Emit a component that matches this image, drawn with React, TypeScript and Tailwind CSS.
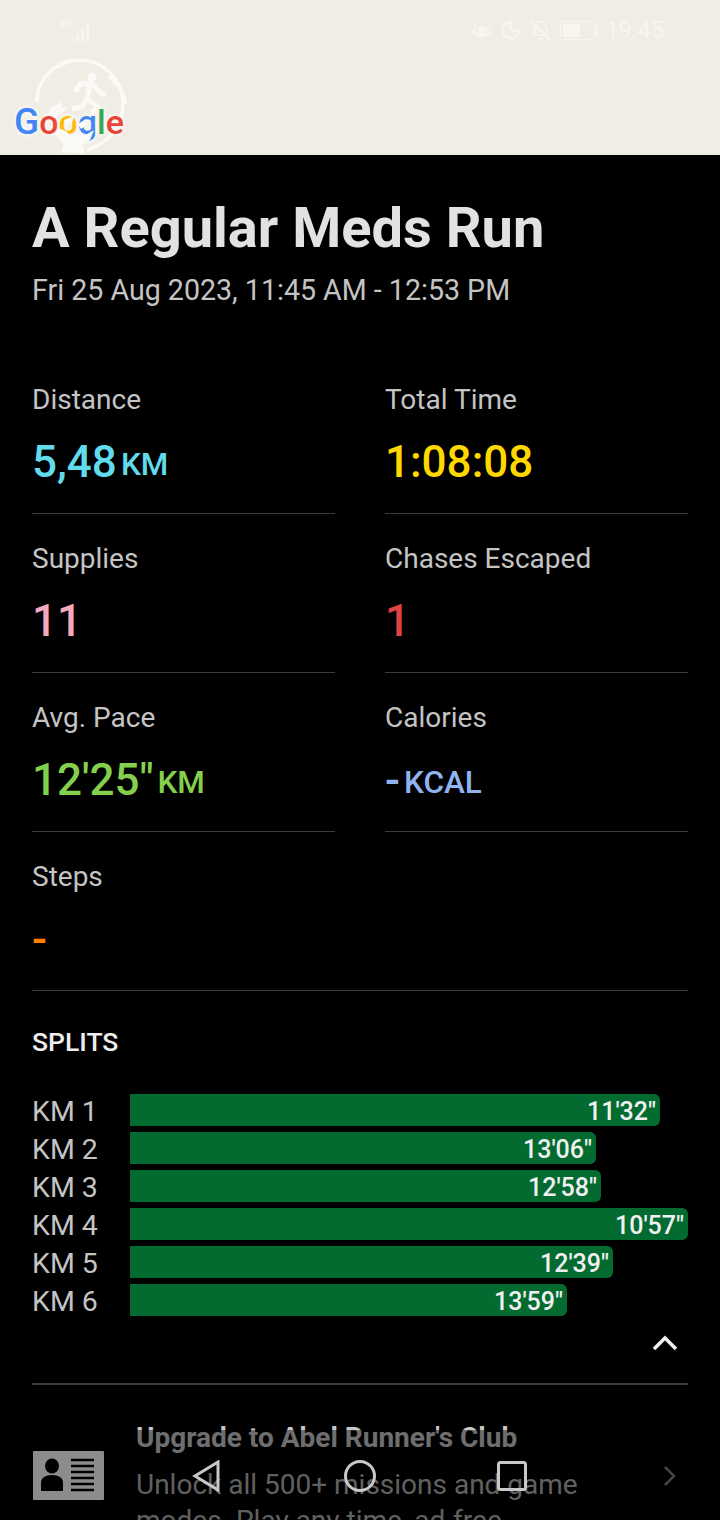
import React from 'react';
import { BellOff, Moon } from 'lucide-react';

const stats = [
    { label: 'Distance', value: '5,48', unit: 'KM', color: 'text-[#62dcec]' },
    { label: 'Total Time', value: '1:08:08', unit: '', color: 'text-[#ffd800]' },
    { label: 'Supplies', value: '11', unit: '', color: 'text-[#f5a9bd]' },
    { label: 'Chases Escaped', value: '1', unit: '', color: 'text-[#e04343]' },
    { label: 'Avg. Pace', value: "12'25\"", unit: 'KM', color: 'text-[#84cf4c]' },
    { label: 'Calories', value: '-', unit: 'KCAL', color: 'text-[#90b4f0]' },
];

const splits = [
    { km: 'KM 1', time: "11'32\"", width: 530 },
    { km: 'KM 2', time: "13'06\"", width: 466 },
    { km: 'KM 3', time: "12'58\"", width: 471 },
    { km: 'KM 4', time: "10'57\"", width: 558 },
    { km: 'KM 5', time: "12'39\"", width: 483 },
    { km: 'KM 6', time: "13'59\"", width: 437 },
];

const Stat = ({ label, value, unit, color }: typeof stats[number]) => (
    <div className="h-[159px] border-b border-[#3c3c3c] pt-[28px]">
        <div className="text-[28px] leading-[34px] text-[#c4c4c4]">{label}</div>
        <div className={`mt-[18px] flex h-[54px] items-baseline font-medium ${color}`}>
            <span className="text-[44px] leading-[54px]">{value}</span>
            {unit && <span className="ml-[4px] -translate-y-[2px] text-[31.500px]">{unit}</span>}
        </div>
    </div>
);

const StatusBar = () => (
    <div className="flex h-[60px] items-center justify-between pl-[58px] pr-[56px]">
        <svg width="34" height="24" viewBox="0 0 34 24" fill="#f7f5f0">
            <text x="1" y="9" fontSize="11" fontWeight="700" fontFamily="Roboto, sans-serif">4G</text>
            <rect x="13" y="19" width="3" height="4" />
            <rect x="18" y="15" width="3" height="8" />
            <rect x="23" y="11" width="3" height="12" />
            <rect x="28" y="6" width="3" height="17" />
        </svg>
        <div className="flex items-center text-[#f7f5f0]">
            <svg width="22" height="22" viewBox="0 0 24 22" fill="none" stroke="currentColor" strokeWidth="2.4">
                <path d="M2 13c5-6 15-6 20 0-5 6-15 6-20 0z" />
                <circle cx="12" cy="13" r="3.5" fill="currentColor" />
                <path d="M5 7 3 4M12 5V2M19 7l2-3" />
            </svg>
            <Moon size={22} strokeWidth={2.4} className="ml-[7px]" />
            <BellOff size={21} strokeWidth={2.2} className="ml-[8px]" />
            <div className="ml-[9px] flex items-center">
                <div className="flex h-[19px] w-[35px] items-center rounded-[3px] border border-[#f7f5f0] px-[2px]">
                    <div className="h-[13px] w-[17px] bg-[#f7f5f0]" />
                </div>
                <div className="ml-[1px] h-[11px] w-[2px] bg-[#f7f5f0]" />
            </div>
            <span className="ml-[7px] mt-[2px] text-[23.500px] leading-none">19:45</span>
        </div>
    </div>
);

const Logo = () => (
    <div className="relative ml-[12px] h-[95px] w-[118px]">
        <svg className="absolute left-[20px] top-[-2px]" width="96" height="96" viewBox="0 0 96 96" fill="none">
            <path d="M5 44C4 22 24 2 48 2c22 0 42 18 43 42 1 20-14 42-36 48" stroke="#fbfaf7" strokeWidth="3.5" />
            <path d="M26 8l8-4M78 18l8 10M90 34l3 12M30 92l22 1" stroke="#fbfaf7" strokeWidth="4.500" />
            <circle cx="60" cy="19" r="4.500" fill="#fbfaf7" />
            <path d="M43 34l5-8 12-1 8 10 6 1M58 26l-3 15 10 7-2 8M55 41l-5 8-10 2" stroke="#fbfaf7" strokeWidth="5" />
        </svg>
        <div className="absolute left-[2px] top-[42px] flex items-baseline text-[34px] leading-[40px] font-medium [text-shadow:0_0_5px_#fbfaf7,0_0_5px_#fbfaf7]">
            <span className="text-[37px] text-[#4285f4]">G</span>
            <span className="text-[#ea4335]">o</span>
            <span className="text-[#fbbc05]">o</span>
            <span className="text-[#4285f4]">g</span>
            <span className="text-[#34a853]">l</span>
            <span className="text-[#ea4335]">e</span>
        </div>
        <svg className="absolute left-[20px] top-[-2px]" width="96" height="96" viewBox="0 0 96 96" fill="#fbfaf7">
            <path d="M18 50l12-6-1 6 6-1-3 5-10 6-5-4z" />
            <path d="M32 62l10-4-2 7-6 4zM46 66l8-5 2 5-7 5zM58 52l8-4-1 7-6 3z" />
            <path d="M26 70l8 3 5 5 7-4 6 4 10-6-4 10-8 5 3 3-10 3-6-4-4 2-4-8-6-6z" />
        </svg>
    </div>
);

export default function App() {
    return (
        <div className="relative h-[1520px] w-[720px] overflow-hidden bg-black font-['Roboto',sans-serif]">
            <div className="h-[155px] bg-[#f0ede5]">
                <StatusBar />
                <Logo />
            </div>

            <div className="px-[32px] pt-[40px]">
                <h1 className="text-[56px] leading-[66px] font-bold text-[#e2e2e2]">A Regular Meds Run</h1>
                <p className="mt-[12px] text-[28.600px] leading-[34px] text-[#c4c4c4]">Fri 25 Aug 2023, 11:45 AM - 12:53 PM</p>

                <div className="mt-[48px] grid grid-cols-2 gap-x-[50px]">
                    {stats.map((s) => (
                        <Stat key={s.label} {...s} />
                    ))}
                </div>

                <div className="h-[159px] border-b border-[#3c3c3c] pt-[28px]">
                    <div className="text-[28px] leading-[34px] text-[#c4c4c4]">Steps</div>
                    <div className="mt-[18px] h-[54px] text-[44px] leading-[54px] font-medium text-[#ff8000]">-</div>
                </div>

                <h2 className="mt-[35px] text-[26.500px] leading-[32px] font-medium text-[#eeeeee]">SPLITS</h2>

                <div className="mt-[36px] flex flex-col gap-[6px]">
                    {splits.map((s) => (
                        <div key={s.km} className="flex h-[32px] items-center">
                            <div className="w-[98px] pt-[3px] text-[28.500px] leading-[32px] text-[#c4c4c4]">{s.km}</div>
                            <div
                                className="flex h-[32px] items-center justify-end rounded-r-[6px] bg-[#036b30] pr-[4px] pt-[4px] text-[25px] font-medium text-[#f0f0f0]"
                                style={{ width: s.width }}
                            >
                                {s.time}
                            </div>
                        </div>
                    ))}
                </div>

                <div className="mt-[12px] flex h-[28px] justify-end pr-[10px]">
                    <svg width="26" height="28" viewBox="0 0 26 28" fill="none" stroke="#f0f0f0" strokeWidth="3.5">
                        <path d="M2 21 13 10l11 11" />
                    </svg>
                </div>

                <div className="mt-[27px] border-t-2 border-[#3c3c3c]" />

                <div className="mt-[36px] flex items-start">
                    <svg width="71" height="49" viewBox="0 0 71 49" className="ml-[1px] mt-[30px] shrink-0">
                        <rect width="71" height="49" rx="1" fill="#ffffff" />
                        <ellipse cx="19" cy="15" rx="7" ry="7.500" fill="#000" />
                        <path d="M8 40V32c0-5 4-8 11-8s11 3 11 8v8z" fill="#000" />
                        <path d="M38 9h23M38 15h23M38 21h23M38 27h23M38 33h23M38 39h23" stroke="#000" strokeWidth="2.5" />
                    </svg>
                    <div className="ml-[32px] w-[460px] shrink-0">
                        <div className="text-[28px] leading-[34px] font-bold text-[#c8c8c8]">Upgrade to Abel Runner's Club</div>
                        <div className="mt-[12px] text-[28px] leading-[36px] text-[#b0b0b0]">Unlock all 500+ missions and game modes. Play any time, ad-free.</div>
                    </div>
                    <svg width="13" height="22" viewBox="0 0 13 22" fill="none" stroke="#7c7c7c" strokeWidth="2.5" className="ml-[67px] mt-[44px] shrink-0">
                        <path d="m2 2 9 9-9 9" />
                    </svg>
                </div>
            </div>

            <div className="absolute bottom-0 left-0 flex h-[90px] w-full items-start bg-black/45 pt-[30px]">
                <svg width="28" height="32" viewBox="0 0 28 32" fill="none" stroke="#c8c8c8" strokeWidth="3" className="ml-[192px]">
                    <path d="M26 2v28L3 16z" />
                </svg>
                <svg width="32" height="32" viewBox="0 0 32 32" fill="none" stroke="#c8c8c8" strokeWidth="3" className="ml-[124px]">
                    <circle cx="16" cy="16" r="14.500" />
                </svg>
                <svg width="30" height="30" viewBox="0 0 30 30" fill="none" stroke="#c8c8c8" strokeWidth="3" className="ml-[121px] mt-[1px]">
                    <rect x="1.500" y="1.500" width="27" height="27" rx="2" />
                </svg>
            </div>
        </div>
    );
}
